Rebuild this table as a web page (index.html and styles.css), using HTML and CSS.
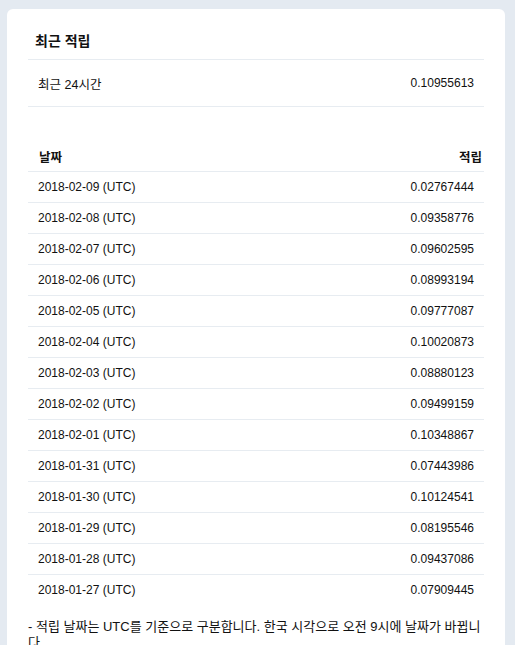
FILE: index.html
```html
<!DOCTYPE html>
<html lang="ko">
<head>
<meta charset="utf-8">
<link rel="stylesheet" href="styles.css">
</head>
<body>
<div class="card">
  <div class="title">최근 적립</div>
  <div class="summary">
    <span class="sum-label">최근 24시간</span>
    <span>0.10955613</span>
  </div>
  <table class="hist">
    <thead>
      <tr><th class="c-date">날짜</th><th class="c-val">적립</th></tr>
    </thead>
    <tbody>
      <tr><td>2018-02-09 (UTC)</td><td class="num">0.02767444</td></tr>
      <tr><td>2018-02-08 (UTC)</td><td class="num">0.09358776</td></tr>
      <tr><td>2018-02-07 (UTC)</td><td class="num">0.09602595</td></tr>
      <tr><td>2018-02-06 (UTC)</td><td class="num">0.08993194</td></tr>
      <tr><td>2018-02-05 (UTC)</td><td class="num">0.09777087</td></tr>
      <tr><td>2018-02-04 (UTC)</td><td class="num">0.10020873</td></tr>
      <tr><td>2018-02-03 (UTC)</td><td class="num">0.08880123</td></tr>
      <tr><td>2018-02-02 (UTC)</td><td class="num">0.09499159</td></tr>
      <tr><td>2018-02-01 (UTC)</td><td class="num">0.10348867</td></tr>
      <tr><td>2018-01-31 (UTC)</td><td class="num">0.07443986</td></tr>
      <tr><td>2018-01-30 (UTC)</td><td class="num">0.10124541</td></tr>
      <tr><td>2018-01-29 (UTC)</td><td class="num">0.08195546</td></tr>
      <tr><td>2018-01-28 (UTC)</td><td class="num">0.09437086</td></tr>
      <tr><td>2018-01-27 (UTC)</td><td class="num">0.07909445</td></tr>
    </tbody>
  </table>
  <p class="note">- 적립 날짜는 UTC를 기준으로 구분합니다. 한국 시각으로 오전 9시에 날짜가 바뀝니다</p>
</div>
</body>
</html>
```
FILE: styles.css
```css
html, body {
  margin: 0;
  padding: 0;
}
body {
  background: #e4eaf1;
  font-family: "Liberation Sans", "Noto Sans CJK KR", sans-serif;
  font-size: 12px;
  color: #111;
}
.card {
  margin: 9px 0 0 7px;
  width: 498px;
  min-height: 700px;
  box-sizing: border-box;
  background: #fff;
  border-radius: 6px 6px 0 0;
  padding: 0 21px;
}
.title {
  padding: 22px 7px 8px;
  line-height: 20px;
  font-size: 14px;
  font-weight: bold;
  border-bottom: 1px solid #e7ecf1;
}
.summary {
  display: flex;
  justify-content: space-between;
  align-items: center;
  height: 46px;
  padding: 0 10px;
  border-bottom: 1px solid #e7ecf1;
}
.sum-label {
  font-size: 12.5px;
}
.hist {
  width: 100%;
  margin-top: 34px;
  border-collapse: collapse;
}
.hist th {
  height: 30px;
  padding: 0 10px 0 11px;
  font-size: 12.5px;
  font-weight: bold;
  border-bottom: 1px solid #e7ecf1;
  text-align: left;
}
.hist th.c-val {
  text-align: right;
  padding-right: 2px;
}
.hist td {
  height: 30px;
  padding: 0 10px;
  border-bottom: 1px solid #e7ecf1;
}
.hist tbody tr:last-child td {
  border-bottom: none;
}
.hist td.num {
  text-align: right;
}
.note {
  margin: 14px 0 0;
  font-size: 13px;
  line-height: 16px;
}
```
